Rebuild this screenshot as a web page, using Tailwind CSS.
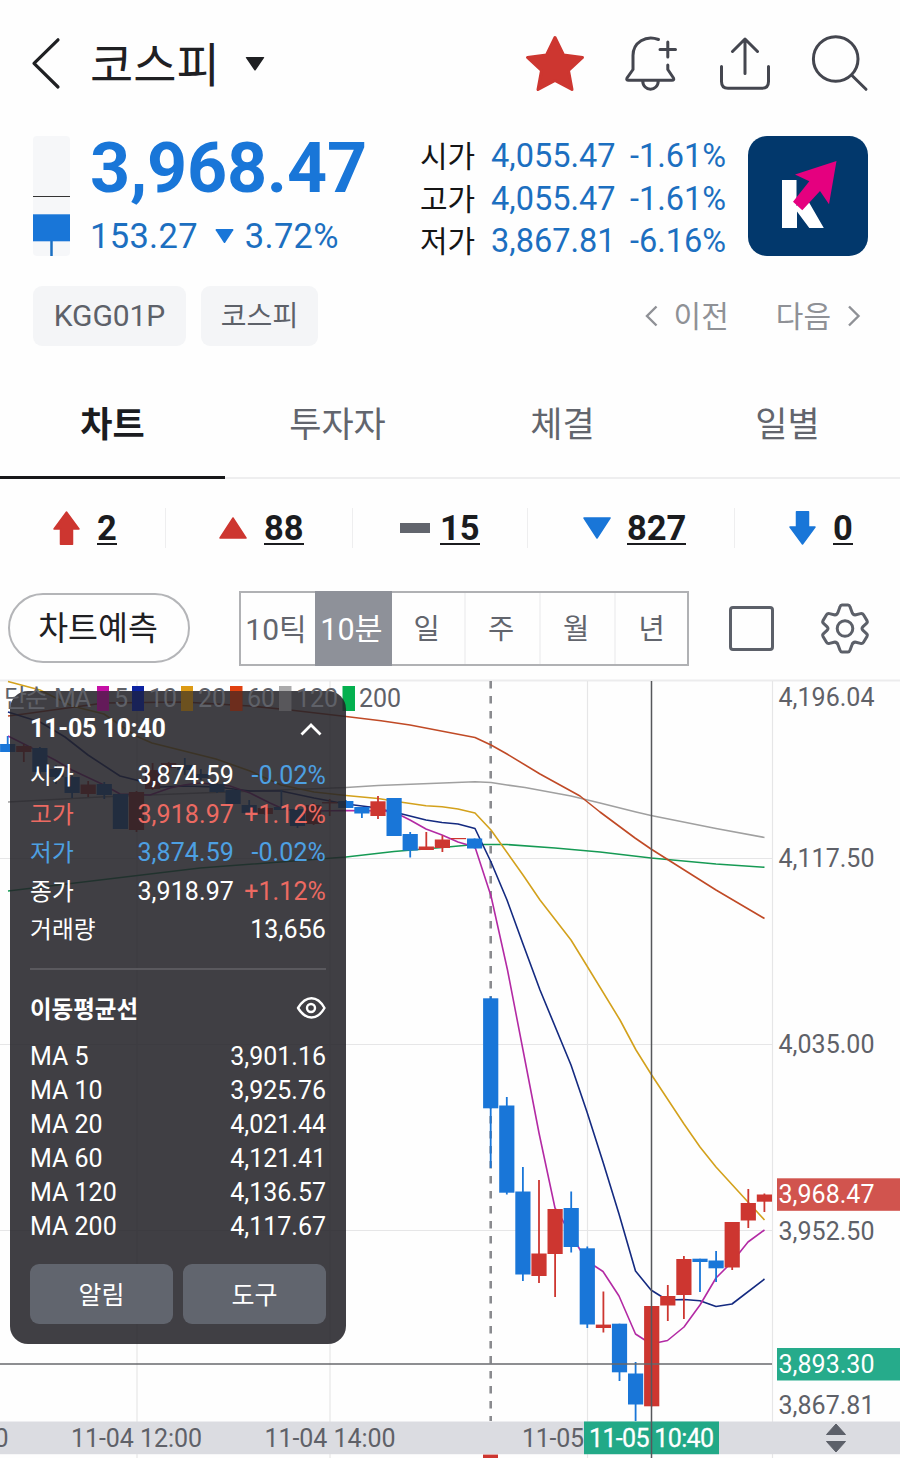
<!DOCTYPE html>
<html lang="ko">
<head>
<meta charset="utf-8">
<title>코스피</title>
<script src="https://cdn.jsdelivr.net/npm/@tailwindcss/browser@4"></script>
</head>
<body class="w-[900px] h-[1458px] overflow-hidden bg-[#fefefe] font-[Roboto,'Noto_Sans_CJK_KR',sans-serif] text-[#1f2023]">
<div class="flex flex-col w-[900px] h-[1458px]">

  <header class="flex items-center h-32 shrink-0 pl-[30px] pr-[28px]">
    <svg class="w-8 h-14" viewBox="30 36 32 56" fill="none" stroke="#1f2023" stroke-width="3.2" stroke-linecap="round" stroke-linejoin="round"><path d="M58 39.8 34 63.3 58 87"/></svg>
    <h1 class="ml-[28px] w-[129px] whitespace-nowrap pt-[2px] text-[47px] leading-none">코스피</h1>
    <svg class="w-5 h-4 ml-[26px]" viewBox="0 0 20 16" fill="#1f2023"><path d="M1.500 1h17a.7.7 0 0 1 .5 1.100L10.800 14a1 1 0 0 1-1.600 0L1 2.100A.7.7 0 0 1 1.500 1z"/></svg>
    <div class="ml-auto flex items-center gap-[31px]">
      <svg class="w-16 h-16" viewBox="523 32 64 64" fill="#cd3630" stroke="#cd3630" stroke-width="3" stroke-linejoin="round"><path d="M555 37.500 563.500 55 582.500 57.500 568.500 70.500 572 89.500 555 80.500 538 89.500 541.500 70.500 527.500 57.500 546.500 55z"/></svg>
      <svg class="w-16 h-16" viewBox="618 32 64 64" fill="none" stroke="#44464f" stroke-width="3" stroke-linecap="round" stroke-linejoin="round"><path d="M658.500 39.500C646 34.500 633 42.500 633 55.500V69.500L627 78Q626 80.300 628.500 80.300H672Q674.500 80.300 673.500 78L667.800 69.500V65M667.800 42V57M660 49.500H675.500M642.700 80.500C642.700 92 658.300 92 658.300 80.500"/></svg>
      <svg class="w-16 h-16" viewBox="713 32 64 64" fill="none" stroke="#44464f" stroke-width="3" stroke-linecap="round" stroke-linejoin="round"><path d="M721.500 66.500V81.500Q721.500 88.300 728 88.300H762Q768.500 88.300 768.500 81.500V66.500M745 73.500V39M732.500 51.500 745 39 757.500 51.500"/></svg>
      <svg class="w-16 h-16" viewBox="808 32 64 64" fill="none" stroke="#44464f" stroke-width="3" stroke-linecap="round"><circle cx="835.700" cy="59" r="22.300"/><path d="M852 75.500 866 89.300"/></svg>
    </div>
  </header>

  <section class="flex h-[120px] mt-2 pl-[33px] shrink-0">
    <svg class="w-[37px] h-[120px]" viewBox="0 0 37 120"><rect width="37" height="120" rx="4" fill="#f6f7f9"/><path d="M0 60.500H37" stroke="#333" stroke-width="1"/><path d="M18.500 100V120" stroke="#1a6fc2" stroke-width="2.500"/><rect y="78.300" width="37" height="27" fill="#1976d8"/></svg>
    <div class="ml-[20px] w-[330px] flex flex-col">
      <div class="h-[64px] leading-[64px] text-[70px] font-bold text-[#1976d8] tracking-[-0.200px]">3,968.47</div>
      <div class="mt-[17px] h-[38px] flex items-center text-[34.500px] leading-[38px] text-[#1c6fc0] tracking-[0.300px]">153.27
        <svg class="w-[19px] h-4 ml-[17px] mr-[11px]" viewBox="0 0 19 16" fill="#1976d8"><path d="M1.200 1h16.600q1 .3.500 1.200L10.300 14.500q-.8 1-1.600 0L.7 2.200Q.2 1.300 1.200 1z"/></svg>
        <span>3.72%</span></div>
    </div>
    <div class="w-[307px] flex flex-col text-[32.500px] leading-[42.500px] -mt-[1px] text-[#1c6fc0]">
      <div class="flex h-[42.500px]"><span class="w-[71px] pt-px text-[30px] text-[#151515]">시가</span><span class="w-[139px]">4,055.47</span><span>-1.61%</span></div>
      <div class="flex h-[42.500px]"><span class="w-[71px] pt-px text-[30px] text-[#151515]">고가</span><span class="w-[139px]">4,055.47</span><span>-1.61%</span></div>
      <div class="flex h-[42.500px]"><span class="w-[71px] pt-px text-[30px] text-[#151515]">저가</span><span class="w-[139px]">3,867.81</span><span>-6.16%</span></div>
    </div>
    <svg class="w-[120px] h-[120px] ml-[21px]" viewBox="748 136 120 120"><rect x="748" y="136" width="120" height="120" rx="19" fill="#02386c"/><path d="M782 180h14.500v26l10-8 17.300 30h-14.500l-12.300-16.500V228H782z" fill="#fff"/><path d="M836.500 161 829 204.300 820 191 802.300 210.300 793 201.700 809.300 181.300 795 174.500z" fill="#e5007f"/></svg>
  </section>

  <section class="flex items-center h-[60px] mt-[30px] pl-[33px] pr-[39px] shrink-0">
    <span class="w-[153px] h-[60px] rounded-[9px] bg-[#f4f5f7] text-[#5d6169] text-[30px] leading-[60px] text-center tracking-[-0.100px]">KGG01P</span>
    <span class="w-[117px] h-[60px] pt-px ml-[15px] rounded-[9px] bg-[#f4f5f7] text-[#5d6169] text-[28px] leading-[60px] text-center">코스피</span>
    <div class="ml-auto flex items-center text-[30px] leading-[60px] text-[#8f9196]">
      <svg class="w-3.5 h-6 mr-[16px]" viewBox="0 0 14 24" fill="none" stroke="#8f9196" stroke-width="2.400"><path d="M12.500 2.500 3 12 12.500 21.500"/></svg><span class="pt-px">이전</span>
      <span class="ml-[47px] pt-px">다음</span>
      <svg class="w-3.5 h-6 ml-[16px]" viewBox="0 0 14 24" fill="none" stroke="#8f9196" stroke-width="2.400"><path d="M2 2.500 11.500 12 2 21.500"/></svg>
    </div>
  </section>

  <nav class="grid grid-cols-4 h-[109px] mt-[24px] shrink-0 text-[35px] leading-[111px] text-center text-[#62656d]">
    <div class="h-[109px] border-b-[3px] border-[#17181a] font-bold text-[#1b1c1f]">차트</div>
    <div class="h-[109px] border-b-[2px] border-[#eeeeef]">투자자</div>
    <div class="h-[109px] border-b-[2px] border-[#eeeeef]">체결</div>
    <div class="h-[109px] border-b-[2px] border-[#eeeeef]">일별</div>
  </nav>

  <section class="flex h-10 mt-[29px] shrink-0 text-[34.500px] font-bold leading-[40px] text-[#1b1c1f]">
    <div class="w-[166px] pl-[53px] flex items-center border-r border-[#eeeeef]"><svg class="w-[27px] h-[34px] mr-[17px]" viewBox="0 0 27 34" fill="#cd3630" stroke="#cd3630" stroke-linejoin="round" stroke-width="1.500"><path d="M13.500 1 26 18H19.500V33.200H7.500V18H1z"/></svg><span class="border-b-2 border-[#1b1c1f] h-[34px] leading-[34px]">2</span></div>
    <div class="w-[187px] pl-[53px] flex items-center border-r border-[#eeeeef]"><svg class="w-7 h-[22px] mr-[17px]" viewBox="0 0 28 22" fill="#cd3630" stroke="#cd3630" stroke-linejoin="round" stroke-width="1.500"><path d="M14 1 27 21H1z"/></svg><span class="border-b-2 border-[#1b1c1f] h-[34px] leading-[34px]">88</span></div>
    <div class="w-[175px] pl-[47px] flex items-center border-r border-[#eeeeef]"><span class="w-[30px] h-[10px] mr-[10px] bg-[#62656d]"></span><span class="border-b-2 border-[#1b1c1f] h-[34px] leading-[34px]">15</span></div>
    <div class="w-[207px] pl-[55px] flex items-center border-r border-[#eeeeef]"><svg class="w-7 h-[22px] mr-[16px]" viewBox="0 0 28 22" fill="#1976d8" stroke="#1976d8" stroke-linejoin="round" stroke-width="1.500"><path d="M14 21 27 1H1z"/></svg><span class="border-b-2 border-[#1b1c1f] h-[34px] leading-[34px]">827</span></div>
    <div class="w-[165px] pl-[54px] flex items-center"><svg class="w-[27px] h-[34px] mr-[17px]" viewBox="0 0 27 34" fill="#1976d8" stroke="#1976d8" stroke-linejoin="round" stroke-width="1.500"><path d="M13.500 33 26 16H19.500V.8H7.500V16H1z"/></svg><span class="border-b-2 border-[#1b1c1f] h-[34px] leading-[34px]">0</span></div>
  </section>

  <section class="flex items-center h-[76px] mt-[42px] shrink-0 pl-2">
    <button class="w-[182px] h-[70px] rounded-full border-2 border-[#b4b5b8] text-[32.500px] leading-[64px] pt-[2px] pr-[2px]">차트예측</button>
    <div class="flex ml-[49px] w-[450px] h-[75px] border-2 border-[#b0b1b4] text-[28.500px] leading-[73px] text-center text-[#62656d]">
      <span class="w-[74px] pr-[4px] text-[30px] whitespace-nowrap">10틱</span>
      <span class="w-[77px] h-[75px] -mt-[2px] leading-[77px] pr-[4px] text-[30.500px] bg-[#8e9199] text-white whitespace-nowrap">10분</span>
      <span class="w-[72px] pr-[3px]">일</span>
      <span class="w-[75px] pr-[3px] border-l-2 border-[#f3f3f4]">주</span>
      <span class="w-[75px] pr-[3px] border-l-2 border-[#f3f3f4]">월</span>
      <span class="w-[73px] border-l-2 border-[#f3f3f4]">년</span>
    </div>
    <span class="ml-10 w-[45px] h-[45px] rounded-[4px] border-[3px] border-[#5c6069]"></span>
    <svg class="ml-[45px] w-[52px] h-[52px]" viewBox="819 602.200 52 52" fill="none" stroke="#5c6069" stroke-width="3" stroke-linejoin="round"><circle cx="845" cy="628.700" r="7.800"/><path d="M842 605.300H848Q849.500 605.300 850 607L852 612.500Q853 615.500 856 615L860.500 613.800Q862.500 613.300 863.500 615L867 620.800Q867.800 622.300 866.500 623.500L863 626.800Q861 628.700 863 630.600L866.500 633.900Q867.800 635.100 867 636.600L863.500 642.400Q862.500 644.100 860.500 643.600L856 642.400Q853 641.900 852 644.900L850 650.400Q849.500 652.100 848 652.100H842Q840.500 652.100 840 650.400L838 644.900Q837 641.900 834 642.400L829.500 643.600Q827.500 644.100 826.500 642.400L823 636.600Q822.200 635.100 823.500 633.900L827 630.600Q829 628.700 827 626.800L823.500 623.500Q822.200 622.300 823 620.800L826.500 615Q827.500 613.300 829.500 613.800L834 615Q837 615.500 838 612.500L840 607Q840.500 605.300 842 605.300z"/></svg>
  </section>

  <main class="relative h-[779px] mt-[13px] shrink-0">
    <svg id="chart" class="block w-[900px] h-[779px]" viewBox="0 679 900 779" font-size="25" fill="#5f6168">
      <path d="M0 680.500H900" stroke="#ececed" stroke-width="2"/>
      <path d="M137 681V1458M330 681V1458M587.500 681V1458M772.500 681V1458M0 858.500H772M0 1044.500H772M0 1230.500H772" stroke="#e6e6e7" stroke-width="1.200"/>
      <path d="M490.700 681V1421" stroke="#8a8b8f" stroke-width="2.600" stroke-dasharray="7.500 7.500"/>
      <g fill="none" stroke-width="1.600" stroke-linejoin="round">
        <polyline stroke="#a0a0a0" points="8,802 100,797 200,793 346,787.500 378,785.500 430,783.500 475,781.700 491,782.500 507,785 525,787.500 571,796 600,803 636,812 651,815.500 716,828.500 764.500,837.500"/>
        <polyline stroke="#169a54" points="8,891 100,880 200,868 346,857 394,851.500 442,847.500 475,844.500 507,844.500 555,848 600,852 651,858 716,864 764.500,867.300"/>
        <polyline stroke="#c04a26" points="8,716 24,714 60,709 104,703 184,702 250,706 290,710 346,716.500 381,720.700 410,725 475,737.500 491,745 507,754 540,774 580,796 600,812 635,838 651,849 716,890 764.500,918.500"/>
        <polyline stroke="#d3a11c" points="8,681.500 40,690 72,706 104,714 136,736 152,743 184,751 216,759 250,771 281,785 314,792 346,795.500 378,798.500 400,802 426,805.800 442,806.800 458,809 475,813 491,830 523,875 540,900 571,940 587,966 620,1020 636,1050 651,1074 684,1124 700,1147 716,1167 748,1202 764.500,1220"/>
        <polyline stroke="#142a80" points="8,712 40,722 65,737 88,755 120,776 136,780 160,787 184,786 217,787 250,791 281,791 314,798 346,804 370,807 394,812 426,820 442,822.500 458,824 475,828.500 491,862 507,900 523,944 540,990 571,1065 587,1112 603,1162 619,1214 635.500,1271 651,1290 667,1300 684,1299.500 700,1300.700 716,1306.500 732,1304 764.500,1279"/>
        <polyline stroke="#b32aa4" points="8,736 24,744 55,760 72,770 104,785 120,794 150,795 170,788 184,785 200,783 230,786 250,793 270,803 281,808 298,812 314,811 346,810.500 385,811 400,815 410,820 426,829 442,835 458,842 475,847 491,896 507.500,970 523,1050 539,1133 555,1208 563,1221 579,1248 587,1261 603,1271.500 619,1296 635.500,1334 651,1344 667.500,1340.500 684,1327 700,1305 716,1278 732,1262 748,1242 764.500,1230"/>
      </g>
      <g id="candles"></g>
      <rect x="483" y="1454.500" width="15" height="4" fill="#cd3630"/>
      <path d="M0 1364H772" stroke="#67686c" stroke-width="1.700"/>
      <rect x="0" y="1421.500" width="900" height="32.700" fill="#dbdce1"/>
      <text x="8.500" y="1446.500" text-anchor="end">0</text>
      <text x="71" y="1446.500" textLength="131">11-04 12:00</text>
      <text x="264.500" y="1446.500" textLength="131">11-04 14:00</text>
      <text x="522" y="1446.500" textLength="62">11-05</text>
      <rect x="584" y="1421.500" width="135" height="32.700" fill="#22a987"/>
      <path d="M651.500 681V1458" stroke="#56575b" stroke-width="1.500"/>
      <text x="589" y="1446.500" textLength="125" fill="#fff" stroke="#fff" stroke-width=".3">11-05 10:40</text>
      <path d="M836 1424 845.500 1434.500H826.500zM836 1452 845.500 1441.500H826.500z" fill="#5c6069" stroke="#5c6069" stroke-linejoin="round"/>
      <text x="778.500" y="706" textLength="96">4,196.04</text>
      <text x="778.500" y="867" textLength="96">4,117.50</text>
      <text x="778.500" y="1053" textLength="96">4,035.00</text>
      <rect x="777" y="1178.300" width="123" height="32.500" fill="#d1544e"/>
      <text x="778.500" y="1203" textLength="96" fill="#fff">3,968.47</text>
      <text x="778.500" y="1239.500" textLength="96">3,952.50</text>
      <rect x="777" y="1348" width="123" height="32.500" fill="#26ab8b"/>
      <text x="778.500" y="1373" textLength="96" fill="#fff">3,893.30</text>
      <text x="778.500" y="1413.500" textLength="96">3,867.81</text>
      <g id="swatches">
        <rect x="97" y="686" width="12" height="25" fill="#c50fa5"/><rect x="132" y="686" width="12" height="25" fill="#0c22a0"/><rect x="181" y="686" width="12" height="25" fill="#dc9a14"/><rect x="230" y="686" width="12.500" height="25" fill="#e0400f"/><rect x="279" y="686" width="12.500" height="25" fill="#aaaaab"/><rect x="342.500" y="686" width="12.500" height="25" fill="#04b04f"/>
      </g>
    </svg>

    <aside class="absolute left-[10px] top-[12px] w-[336px] h-[653px] rounded-[18px] bg-[#242328]/87 px-5 text-white text-[25px] leading-[38.500px] flex flex-col">
      <div class="flex items-center justify-between h-[45px] mt-[15px] font-bold tracking-[-0.200px]"><span class="leading-[45px]">11-05 10:40</span>
        <svg class="w-[22px] h-4 mr-1" viewBox="0 0 22 16" fill="none" stroke="#fff" stroke-width="2.800"><path d="M1.500 13.500 11 4 20.500 13.500"/></svg></div>
      <div class="mt-[6px] grid grid-cols-[68px_1fr_92px] auto-rows-[38.500px] text-right tracking-[0.100px] [&>*:nth-child(3n+1)]:text-left [&>*:nth-child(3n+1)]:text-[23.700px]">
        <span>시가</span><span>3,874.59</span><span class="text-[#4da0e2]">-0.02%</span>
        <span class="text-[#ec6a62]">고가</span><span class="text-[#ec6a62]">3,918.97</span><span class="text-[#ec6a62]">+1.12%</span>
        <span class="text-[#4da0e2]">저가</span><span class="text-[#4da0e2]">3,874.59</span><span class="text-[#4da0e2]">-0.02%</span>
        <span>종가</span><span>3,918.97</span><span class="text-[#ec6a62]">+1.12%</span>
        <span class="whitespace-nowrap">거래량</span><span></span><span>13,656</span>
      </div>
      <div class="h-[2px] mt-[18px] bg-[#5a595e] shrink-0"></div>
      <div class="flex items-center justify-between h-[40px] mt-[18px]"><span class="font-bold text-[23.500px] pt-[5px]">이동평균선</span>
        <svg class="w-[30px] h-6 shrink-0" viewBox="0 0 30 24" fill="none" stroke="#fff" stroke-width="2.400"><path d="M2 12Q8 2.300 15.500 2.300T28.500 12Q23 21.500 15.500 21.500T2 12z" stroke-linejoin="round"/><circle cx="15" cy="12" r="4"/></svg></div>
      <div class="mt-[12px] leading-[34.200px] [&>div]:flex [&>div]:justify-between [&>div]:h-[34.200px]">
        <div><span>MA 5</span><span>3,901.16</span></div>
        <div><span>MA 10</span><span>3,925.76</span></div>
        <div><span>MA 20</span><span>4,021.44</span></div>
        <div><span>MA 60</span><span>4,121.41</span></div>
        <div><span>MA 120</span><span>4,136.57</span></div>
        <div><span>MA 200</span><span>4,117.67</span></div>
      </div>
      <div class="flex gap-[10px] mt-auto mb-5 text-center leading-[60px]"><button class="flex-1 h-[60px] pt-[2px] rounded-[9px] bg-[#61656e]">알림</button><button class="flex-1 h-[60px] pt-[2px] rounded-[9px] bg-[#61656e]">도구</button></div>
    </aside>

    <svg class="absolute left-0 top-0 w-[420px] h-10 pointer-events-none" viewBox="0 679 420 40" font-size="25" fill="#5f6168">
      <g opacity=".3"><rect x="97" y="691" width="12" height="20" fill="#c50fa5"/><rect x="132" y="691" width="12" height="20" fill="#0c22a0"/><rect x="181" y="691" width="12" height="20" fill="#dc9a14"/><rect x="230" y="691" width="12.500" height="20" fill="#e0400f"/><rect x="279" y="691" width="12.500" height="20" fill="#aaaaab"/></g>
      <text x="4" y="707" textLength="44">단순</text><text x="54" y="707" textLength="37">MA</text><text x="114" y="707">5</text><text x="149" y="707" textLength="28">10</text><text x="198" y="707" textLength="28">20</text><text x="247" y="707" textLength="28">60</text><text x="296" y="707" textLength="42">120</text><text x="359" y="707" textLength="42">200</text>
    </svg>
  </main>
</div>
<script>
// Newest candle first: [body top, body bottom, wick top, wick bottom, rising]
const candles = [
 [1194.5,1201.7,1193.5,1212,1],[1203,1220.5,1189,1228,1],[1222,1267.5,1222,1270,1],[1260.5,1268.3,1251,1282,0],
 [1258.7,1262,1258.7,1292,0],[1259,1295,1256,1319,1],[1296,1305.5,1285,1321,1],[1306,1406.3,1306,1406.3,1],
 [1373.5,1404.5,1362,1421,0],[1323.7,1372.3,1323.7,1381,0],[1324.6,1328,1291.5,1332.5,1],[1248.3,1324.5,1246.5,1328,0],
 [1208,1247,1191.5,1252.5,0],[1209,1254,1209,1297,1],[1253.5,1276,1180,1283,1],[1191.5,1274.5,1167,1281,0],
 [1105.5,1192.7,1097,1194.5,0],[998.3,1108.3,996.5,1168,0],[838.5,848.5,838.5,848.5,0],[838,839.2,838,839,1],
 [839.5,848,835.5,852,1],[846.5,850,832,850,1],[834,850.5,832,857.5,0],[798,836,798,836,0],[801.3,816,796,819,1],
 [807,813.5,807,818,0],[801,808,800,808,0],[802,803.5,799,816,1],[805,824,803,825,1],[809,826,806,828,0],
 [807,810,790,810,0],[808,814,806,815,1],[805,813,800,815,0],[790,804,789,804,0],[784,792,782,793,0],[774,778,769,780,0],
 [765,770,758,775,0],[763,768,762,774,1],[770,789,763,790,1],[792,830,791,832,1],[794,829,794,829,0],[784,795,782,799,0],
 [784.5,794,781,797,1],[777,793,776,798,0],[769,777,765,784,0],[748,772,747,774,0],[746,752,744,762,1],[744,752,736,752,0]
];
document.getElementById('candles').innerHTML = candles.map(([t,b,wt,wb,up],i) => {
  const x = 764.4 - 16.1 * i, c = up ? '#cd3630' : '#1976d8';
  return `<path d="M${x} ${wt}V${wb}" stroke="${c}" stroke-width="1.8"/><rect x="${x-7.6}" y="${t}" width="15.2" height="${b-t}" fill="${c}"/>`;
}).join('');
</script>
</body>
</html>
